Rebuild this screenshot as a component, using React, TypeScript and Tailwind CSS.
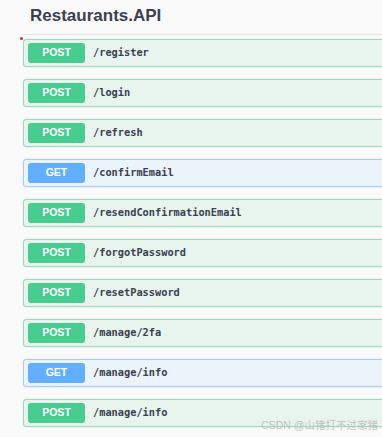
import React from 'react';

type Op = { method: 'POST' | 'GET'; path: string };

const ops: Op[] = [
    { method: 'POST', path: '/register' },
    { method: 'POST', path: '/login' },
    { method: 'POST', path: '/refresh' },
    { method: 'GET', path: '/confirmEmail' },
    { method: 'POST', path: '/resendConfirmationEmail' },
    { method: 'POST', path: '/forgotPassword' },
    { method: 'POST', path: '/resetPassword' },
    { method: 'POST', path: '/manage/2fa' },
    { method: 'GET', path: '/manage/info' },
    { method: 'POST', path: '/manage/info' },
];

const OpRow: React.FC<{ op: Op }> = ({ op }) => {
    const isGet = op.method === 'GET';
    return (
        <div
            className={
                isGet
                    ? 'ml-[23px] w-[380px] h-[28px] flex items-center gap-[8px] pl-[4px] rounded-[3px] border border-[#a6cdf3] bg-[#ebf3fb] shadow-[0_0_2px_rgba(0,0,0,0.12)]'
                    : 'ml-[23px] w-[380px] h-[28px] flex items-center gap-[8px] pl-[4px] rounded-[3px] border border-[#9ad9bb] bg-[#e7f5ee] shadow-[0_0_2px_rgba(0,0,0,0.12)]'
            }
        >
            <span
                className={
                    isGet
                        ? 'w-[57px] h-[20px] rounded-[3px] bg-[#61affe] text-white font-bold text-[10.5px] flex items-center justify-center'
                        : 'w-[57px] h-[20px] rounded-[3px] bg-[#49cc90] text-white font-bold text-[10.5px] flex items-center justify-center'
                }
                style={{ fontFamily: '"Liberation Sans", Arial, sans-serif' }}
            >
                {op.method}
            </span>
            <span
                className="text-[10.3px] font-semibold text-[#3b4151]"
                style={{ fontFamily: '"DejaVu Sans Mono", monospace' }}
            >
                {op.path}
            </span>
        </div>
    );
};

export default function App() {
    return (
        <div className="relative w-[382px] h-[437px] overflow-hidden bg-[#fafafa] pt-[6px]">
            <div className="ml-[23px] pl-[7px] pb-[8px] border-b border-[#e3e3e3]">
                <h1
                    className="text-[17px] leading-[20px] font-bold text-[#3b4151]"
                    style={{ fontFamily: '"Liberation Sans", Arial, sans-serif' }}
                >
                    Restaurants.API
                </h1>
            </div>

            <div className="absolute left-[20px] top-[37px] w-[3px] h-[3px] rounded-full bg-[#e0202a]"></div>

            <div className="mt-[4px] flex flex-col gap-[12px]">
                {ops.map((op, i) => (
                    <OpRow key={i} op={op} />
                ))}
            </div>

            <div
                className="absolute right-[4px] top-[418px] text-[10.5px] leading-[14px] text-[#c2c2c2]"
                style={{ fontFamily: '"Liberation Sans", "Noto Sans CJK SC", sans-serif' }}
            >
                CSDN @山猪打不过家猪
            </div>
        </div>
    );
}
